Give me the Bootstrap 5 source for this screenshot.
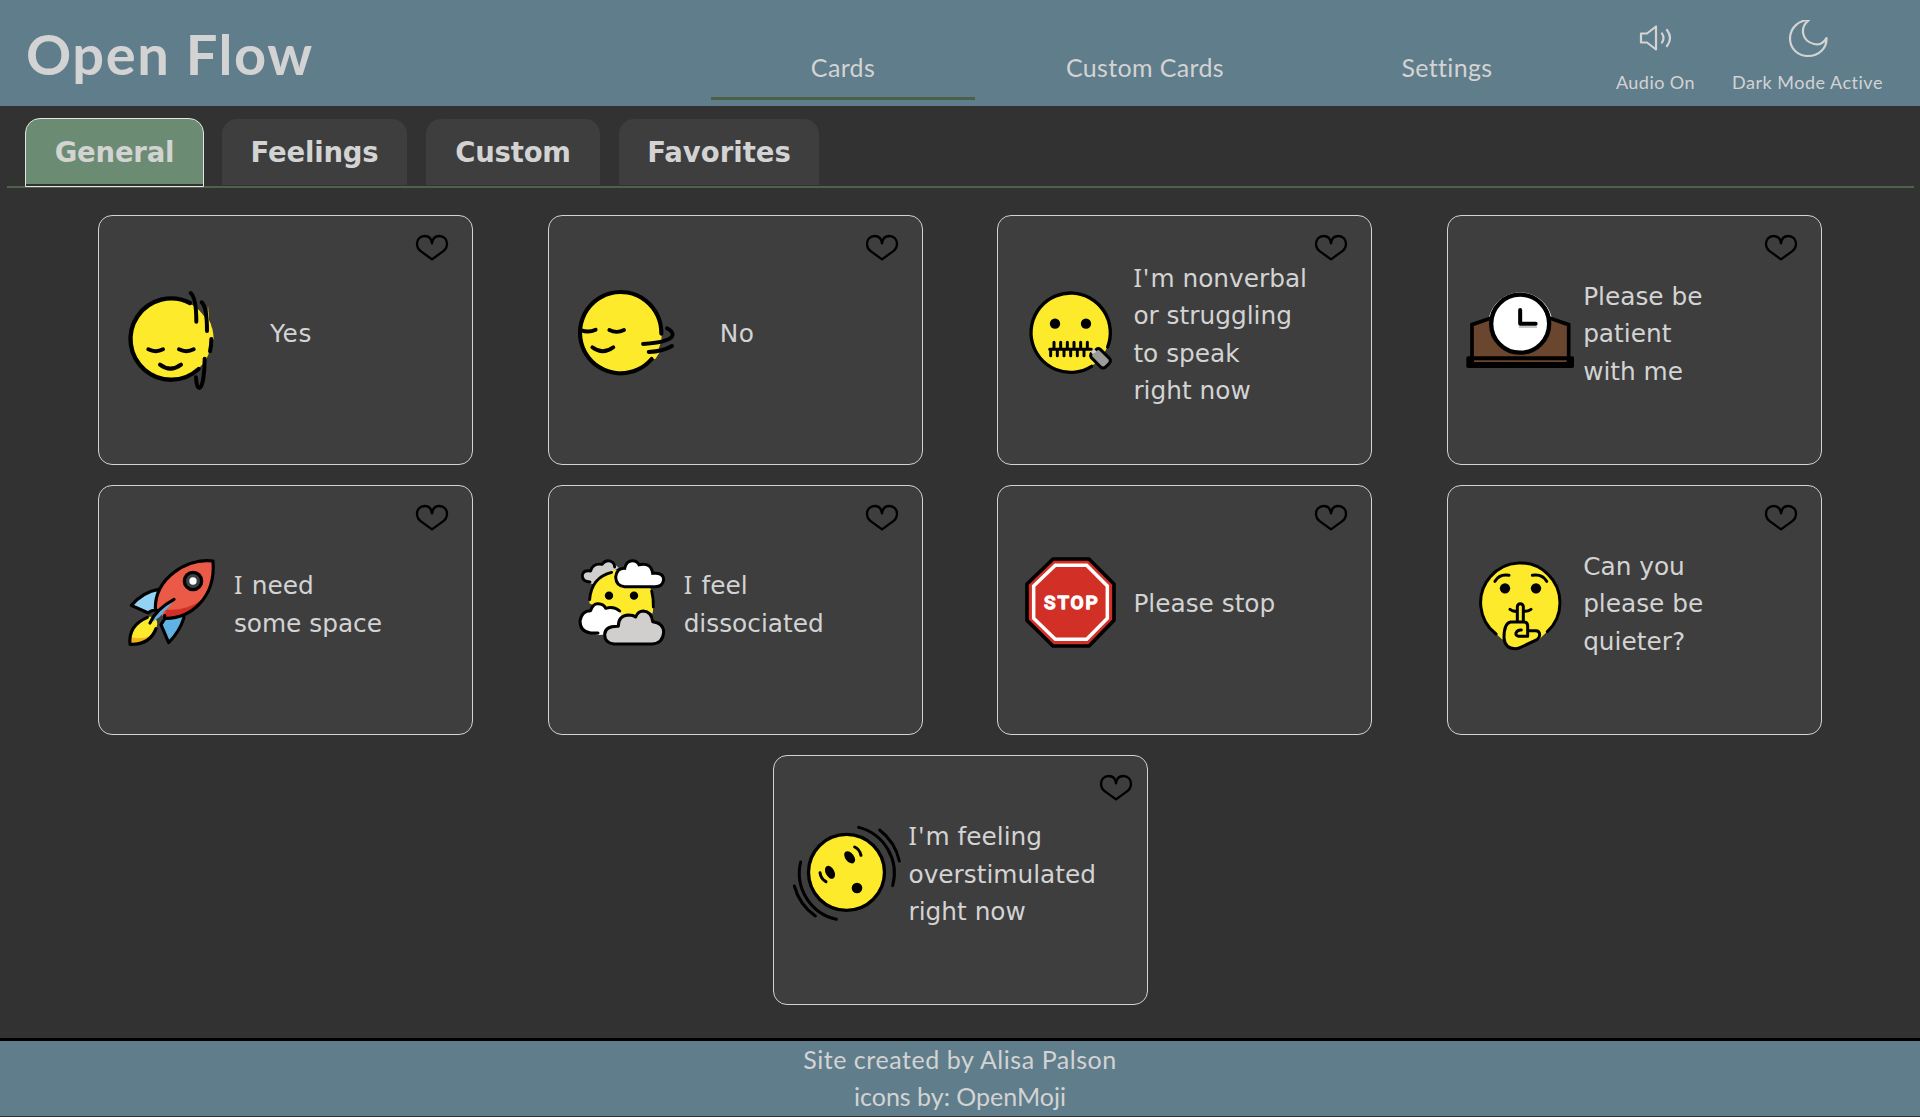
<!DOCTYPE html>
<html lang="en">
<head>
<meta charset="utf-8">
<meta name="viewport" content="width=device-width, initial-scale=1">
<title>Open Flow</title>
<link rel="stylesheet" href="https://cdn.jsdelivr.net/npm/bootstrap@5.3.0/dist/css/bootstrap.min.css">
<style>
body{background:#323232;color:#d3d3d3;font-family:"DejaVu Sans",sans-serif}
.site-head,.site-foot{background:#607d8b;font-family:Lato,sans-serif;color:#d3d3d3}
.site-head{height:106px}
.brand{width:711px;padding-left:26px;font-size:56px;font-weight:700;line-height:108px;letter-spacing:1.6px;color:#d3d3d3}
.main-nav{gap:38px;height:100px}
.main-nav .nav-link{width:264px;padding:0;color:#d3d3d3;font-size:25px;line-height:38px;padding-top:48px;padding-bottom:1px;border-bottom:3px solid transparent;text-align:center;letter-spacing:.35px}
.main-nav .nav-link.active{height:100px;border-color:#4c6049}
.toggle-btn{background:none;border:0;color:#d3d3d3;font-size:18px;line-height:24px;padding:0;white-space:nowrap}
.audio-btn{width:100px;margin-left:26.5px;letter-spacing:.45px}
.audio-btn svg{margin-bottom:14px}
.dark-btn{width:160px;margin-left:22px;letter-spacing:.5px}
.dark-btn svg{margin-bottom:10px}
.card-tabs{margin:12px 6px 0 7px;padding-left:18px;height:70px;border-bottom:2px solid #4d6349}
.card-tabs .nav-link{height:66px;margin:1px 19px 0 0;padding:0;background:#3e3e3e;color:#d3d3d3;border:0;border-radius:15px 15px 0 0;font-size:27.5px;font-weight:700;line-height:67px;text-align:center;letter-spacing:-.2px}
.card-tabs .nav-link.active{height:69px;margin:0 18px 0 0;background:#6b8c72;color:#d3d3d3;border:1px solid #e4e4e4;border-radius:15px 15px 0 0;box-shadow:inset 0 -2px #323232}
.w-general{width:179px}.w-feelings{width:185px}.w-custom{width:174px}
.card-tabs .w-favorites{width:200px;letter-spacing:0}
.deck{width:1799px;margin-top:27px;row-gap:20px}
.say-card{width:375px;height:250px;background:#3e3e3e;border:1px solid #d3d3d3;border-radius:14px;color:#d3d3d3;padding:0 10px 15px;font-size:24.8px;line-height:37.5px}
.say-card .pic{width:125px;height:125px;flex:none}
.say-text{white-space:nowrap;padding-top:3px}
.short .say-text{margin-left:36px;letter-spacing:.7px}
.serif-i .say-text::first-letter{font-family:"Noto Sans",sans-serif;letter-spacing:1.5px}
.fav{position:absolute;top:18px;right:23px;width:34px;height:27px;padding:0;border:0;background:none;line-height:0}
.wide .fav{right:14px}
.pic .o,.pic .o *{fill:none;stroke:#000;stroke-linecap:round;stroke-linejoin:round}
.site-foot{margin-top:33px;height:78px;border-top:3px solid #000;font-size:25px;line-height:37px}
.credit{letter-spacing:.55px}
</style>
</head>
<body>
<svg width="0" height="0" class="position-absolute">
  <symbol id="heart" viewBox="975 87 102 81"><path d="M1026 115C1024 99 1014 93 1004 93C990 93 981 103 981 116C981 127 985 133 993 139L1026 163L1059 139C1067 133 1071 127 1071 116C1071 103 1062 93 1048 93C1038 93 1028 99 1026 115Z" fill="none" stroke="#000" stroke-width="7" stroke-linejoin="round"/></symbol>
</svg>

<header class="site-head d-flex align-items-start">
  <a class="brand text-decoration-none" href="#">Open Flow</a>
  <nav class="nav main-nav flex-nowrap">
    <a class="nav-link active" href="#">Cards</a>
    <a class="nav-link" href="#">Custom Cards</a>
    <a class="nav-link" href="#">Settings</a>
  </nav>
  <button class="toggle-btn audio-btn d-flex flex-column align-items-center pt-3 mt-1" type="button">
    <svg width="34" height="36" viewBox="0 0 34 36" fill="none" stroke="#d3d3d3" stroke-width="2.200" stroke-linecap="round" stroke-linejoin="round"><path d="M2 13.500H8L17 6.500V29.500L8 22.500H2Z"/><path d="M23 13.500Q26 18 23 22.500M28 10Q34 18 28 26"/></svg>
    <span>Audio On</span>
  </button>
  <button class="toggle-btn dark-btn d-flex flex-column align-items-center pt-3 mt-1" type="button">
    <svg width="40" height="40" viewBox="0 0 40 40" fill="none" stroke="#d3d3d3" stroke-width="2.200" stroke-linejoin="round"><path d="M21 0C12 0 2 7 2 18.500C2 29 10.500 36 20 36C31 36 39 28 38.500 18C36 23 31 25.500 26 24C14 21 11 8 21 0Z"/></svg>
    <span>Dark Mode Active</span>
  </button>
</header>

<nav class="nav card-tabs flex-nowrap">
  <a class="nav-link active w-general" href="#">General</a>
  <a class="nav-link w-feelings" href="#">Feelings</a>
  <a class="nav-link w-custom" href="#">Custom</a>
  <a class="nav-link w-favorites" href="#">Favorites</a>
</nav>

<main class="deck d-flex flex-wrap justify-content-around mx-auto">
  <div class="card say-card short flex-row align-items-center">
    <svg class="pic" viewBox="57 195 375 375"><circle cx="242" cy="403" r="122" fill="#fcea2b"/><path d="M303 280L345 280L375 400L362 384L352 340L325 306L305 296Z" fill="#3e3e3e"/><path d="M326 490L352 466L375 450L370 510L315 530Z" fill="#3e3e3e"/><path d="M354 300Q352 350 352 380L364 398L371 405Q371 370 357 345Z" fill="#fcea2b"/><path d="M354 290Q361 330 366 370L390 370V280Z" fill="#3e3e3e"/>
      <g class="o" stroke-width="12"><path d="M300 294A122 122 0 1 0 326 492" stroke-width="13"/><path d="M302 264C314 274 319 300 319 350M335 292C346 302 351 330 351 378M364 402Q364 424 360 439M344 461C344 503 338 549 328 549C322 549 319 538 318 517M175 433Q197 444 219 433M267 433Q289 444 311 433M210 479Q241 503 273 479"/></g></svg>
    <div class="say-text">Yes</div>
    <button class="fav" type="button" aria-label="Favorite"><svg width="34" height="27"><use href="#heart"/></svg></button>
  </div>
  <div class="card say-card short flex-row align-items-center">
    <svg class="pic" viewBox="57 195 375 375"><circle cx="242" cy="383" r="124" fill="#fcea2b"/><path d="M338 466L372 436V480H330Z" fill="#3e3e3e"/><path d="M335 462L346 462L360 440H340Z" fill="#fcea2b"/>
      <g class="o" stroke-width="11.500"><path d="M364 386A122 122 0 1 0 335 462" stroke-width="12.500"/><path d="M124 376Q146 384 167 374M208 375Q230 386 252 375M157 427Q188 451 220 427M309 417C366 414 398 403 398 388Q397 378 381 370M326 441Q370 439 396 423"/></g></svg>
    <div class="say-text">No</div>
    <button class="fav" type="button" aria-label="Favorite"><svg width="34" height="27"><use href="#heart"/></svg></button>
  </div>
  <div class="card say-card serif-i flex-row align-items-center">
    <svg class="pic" viewBox="54 195 375 375"><circle cx="241.500" cy="382" r="119" fill="#fcea2b"/><path d="M310 488L366 432V500H310Z" fill="#3e3e3e"/>
      <g class="o" stroke-width="10"><path d="M353 426A119 119 0 1 0 305 484"/><path d="M179 433H304M192 412V433M212 412V433M232 412V433M252 412V433M272 412V433M292 412V433M182 433V452M202 433V452M222 433V452M242 433V452M262 433V452M282 433V452" stroke-width="9"/></g>
      <path d="M319 433Q325 428 331 433L359 461Q364 467 358 475L347 486Q339 492 332 486L304 458Q300 452 303 446Z" fill="#9b9b9a" stroke="#000" stroke-width="9" stroke-linejoin="round"/><path d="M302 440L312 431L320 440L308 448Z" fill="#d0cfce"/>
      <circle cx="195" cy="356" r="15.500"/><circle cx="288" cy="356" r="15.500"/></svg>
    <div class="say-text">I'm nonverbal<br>or struggling<br>to speak<br>right now</div>
    <button class="fav" type="button" aria-label="Favorite"><svg width="34" height="27"><use href="#heart"/></svg></button>
  </div>
  <div class="card say-card flex-row align-items-center">
    <svg class="pic" viewBox="54 195 375 375"><path d="M96 480V359L160 337H322L386 359V480Z" fill="#6a462f" stroke="#000" stroke-width="11"/><rect x="79" y="454" width="323" height="35" rx="5"/><path d="M102 468.500H380" stroke="#6a462f" stroke-width="5"/><path d="M149 335A95 95 0 0 1 333 335" fill="none" stroke="#fff" stroke-width="3"/><circle cx="240.500" cy="356" r="87" fill="#fff" stroke="#000" stroke-width="13"/><path d="M237 366H291" stroke="#aaa" stroke-width="4"/><path d="M240.500 315V356H287" fill="none" stroke="#000" stroke-width="12" stroke-linecap="round" stroke-linejoin="round"/></svg>
    <div class="say-text">Please be<br>patient<br>with me</div>
    <button class="fav" type="button" aria-label="Favorite"><svg width="34" height="27"><use href="#heart"/></svg></button>
  </div>
  <div class="card say-card serif-i flex-row align-items-center">
    <svg class="pic" viewBox="57 195 375 375">
      <path d="M208 343Q160 352 124 391L175 414L197 400Z" fill="#92d3f5"/><path d="M222 425L213 449L236 503Q272 468 283 425Z" fill="#61b2e4"/><path d="M175 425Q114 452 120 508Q190 510 200 455Q206 435 190 425Z" fill="#fcea2b"/><path d="M122 487Q155 494 180 482Q160 512 121 507Z" fill="#f1b31c"/>
      <path d="M369 258C290 248 195 310 196 402L225 430C300 432 378 370 369 258Z" fill="#ea5a47"/><path d="M222 428L228 404Q290 408 335 374Q295 430 222 428Z" fill="#d22f27"/><path d="M252 373Q190 404 180 444Q214 428 222 408Q240 395 252 373Z" fill="#61b2e4"/>
      <g class="o" stroke-width="9.500"><path d="M196 400C195 310 290 248 369 258C378 370 300 432 224 430V421M206 343Q160 350 124 391L175 414Q184 404 202 406M224 432L213 449L236 503Q270 468 282 427M172 427Q114 452 120 508Q180 510 198 461M252 373Q197 403 180 444"/></g><circle cx="309" cy="318" r="26" fill="#3f3f3f" stroke="#000" stroke-width="10"/><circle cx="309" cy="318" r="11" fill="#fff"/></svg>
    <div class="say-text">I need<br>some space</div>
    <button class="fav" type="button" aria-label="Favorite"><svg width="34" height="27"><use href="#heart"/></svg></button>
  </div>
  <div class="card say-card serif-i flex-row align-items-center">
    <svg class="pic" viewBox="57 195 375 375">
      <path d="M150 325Q126 320 127 300Q131 284 152 286Q160 264 186 267Q202 248 222 266L236 278L215 292Q178 300 160 328Z" fill="#d0cfce"/><path d="M148 385C148 320 195 280 245 285L330 335Q345 375 338 415L240 430Z" fill="#fcea2b"/>
      <g class="o" stroke-width="8.500"><path d="M150 321Q126 320 127 300Q131 284 152 288Q158 264 186 268Q200 250 218 262Q224 268 224 276M149 374Q154 307 215 292M335 348Q341 372 340 396"/></g>
      <path d="M254 335Q228 333 227 306Q230 279 254 280Q259 257 277 257Q291 257 297 269Q333 261 338 295Q370 292 371 313Q369 335 346 335Z" fill="#fff" stroke="#000" stroke-width="9"/>
      <path d="M178 480L150 473Q120 468 120 438Q125 407 152 407Q160 385 174 386Q192 387 197 400Q225 394 240 409L248 430L205 478Z" fill="#fff"/><path class="o" d="M174 474H152Q120 470 120 438Q125 407 152 407Q159 385 174 386Q192 387 197 400Q222 393 239 408" fill="none" stroke="#000" stroke-width="9" stroke-linecap="round" stroke-linejoin="round"/>
      <path d="M222 507Q194 505 194 478Q195 453 235 454Q235 421 266 420Q280 420 287 426Q294 408 310 408Q334 409 338 440Q370 444 371 471Q369 505 336 507Z" fill="#d0cfce" stroke="#000" stroke-width="9" stroke-linejoin="round"/><circle cx="207" cy="362" r="12.500"/><circle cx="282" cy="362" r="12.500"/></svg>
    <div class="say-text">I feel<br>dissociated</div>
    <button class="fav" type="button" aria-label="Favorite"><svg width="34" height="27"><use href="#heart"/></svg></button>
  </div>
  <div class="card say-card flex-row align-items-center">
    <svg class="pic" viewBox="54 195 375 375"><path d="M189 252H297L372 327V436L297 513H189L111 436V327Z" fill="#d22f27" stroke="#000" stroke-width="11" stroke-linejoin="round"/><path d="M196 271H290L352 333V430L290 493H196L131 430V333Z" fill="none" stroke="#fff" stroke-width="10.500"/><text x="162" y="403" textLength="161" lengthAdjust="spacing" font-family="Roboto, sans-serif" font-weight="500" font-size="57" fill="#fff" stroke="#fff" stroke-width="4" stroke-linejoin="round">STOP</text></svg>
    <div class="say-text">Please stop</div>
    <button class="fav" type="button" aria-label="Favorite"><svg width="34" height="27"><use href="#heart"/></svg></button>
  </div>
  <div class="card say-card flex-row align-items-center">
    <svg class="pic" viewBox="54 195 375 375"><path d="M169 477A119 119 0 1 1 321 470L298 493H186Z" fill="#fcea2b"/><path d="M208 441H258L265 466H290L299 484Q260 515 226 521Q192 518 192 488Z" fill="#fcea2b"/>
      <g class="o" stroke-width="9"><path d="M168 477A119 119 0 1 1 322 470"/><path d="M165 319Q178 296 207 301M320 319Q307 296 277 301M210 403Q219 410 230 409M273 403Q265 409 255 409M232 438V395A9 9 0 0 1 250 395V438M263 484V452Q262 441 252 441H212Q192 444 192 488Q194 521 226 521Q236 521 244 516L291 494Q299 488 299 480Q299 467 287 467H267M263 484H236Q226 482 228 474Q232 464 244 465"/></g><circle cx="195" cy="340" r="15.500"/><circle cx="288" cy="340" r="15.500"/></svg>
    <div class="say-text">Can you<br>please be<br>quieter?</div>
    <button class="fav" type="button" aria-label="Favorite"><svg width="34" height="27"><use href="#heart"/></svg></button>
  </div>
  <div class="card say-card serif-i wide flex-row align-items-center">
    <svg class="pic" viewBox="72 195 375 375"><circle cx="259.500" cy="382" r="114" fill="#fcea2b" stroke="#000" stroke-width="10"/>
      <g class="o" stroke-width="9"><path d="M296 247A142 142 0 0 1 398 422M359 255A162 162 0 0 1 418 348M122 351A142 142 0 0 0 229 523M103 423A162 162 0 0 0 166 513M284 306Q299 313 303 331M180 383Q182 401 198 410"/></g>
      <ellipse cx="269" cy="337" rx="13" ry="21" transform="rotate(-38 269 337)"/><ellipse cx="210" cy="382" rx="13" ry="21" transform="rotate(-28 210 382)"/><circle cx="291" cy="429" r="16"/></svg>
    <div class="say-text">I'm feeling<br>overstimulated<br>right now</div>
    <button class="fav" type="button" aria-label="Favorite"><svg width="34" height="27"><use href="#heart"/></svg></button>
  </div>
</main>

<footer class="site-foot text-center">
  <div class="credit">Site created by Alisa Palson</div>
  <div>icons by: OpenMoji</div>
</footer>
<script src="https://cdn.jsdelivr.net/npm/bootstrap@5.3.0/dist/js/bootstrap.bundle.min.js"></script>
</body>
</html>
